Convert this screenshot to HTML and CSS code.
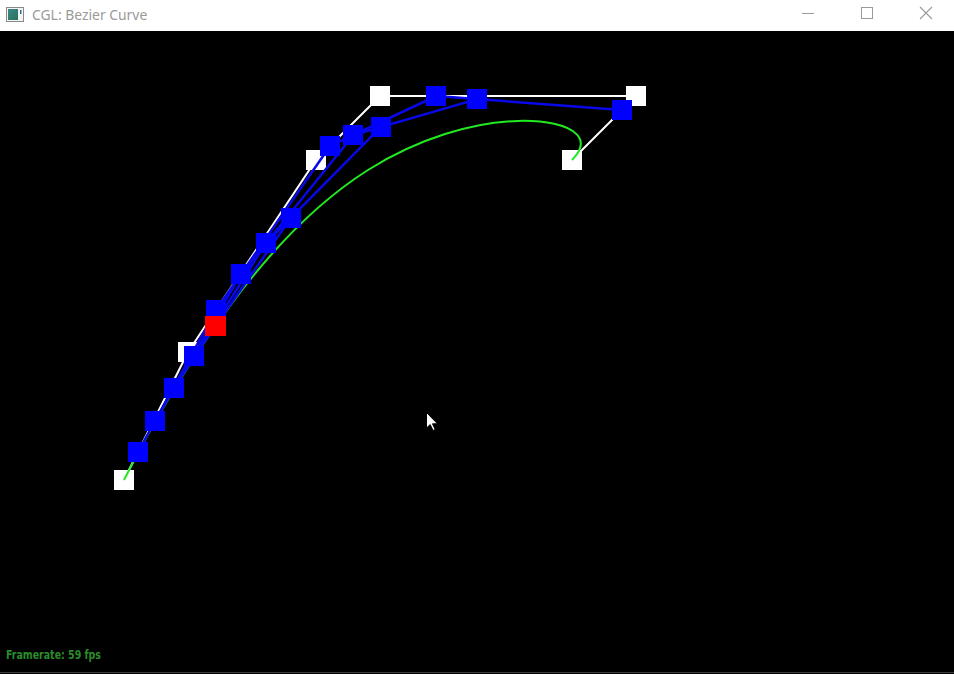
FILE: index.html
```html
<!DOCTYPE html>
<html>
<head>
<meta charset="utf-8">
<title>CGL: Bezier Curve</title>
<link rel="stylesheet" href="styles.css">
</head>
<body>
<div class="window">
  <header class="titlebar">
    <svg class="app-icon" width="18" height="16" viewBox="0 0 18 16">
      <rect x="0.5" y="0.5" width="17" height="14" fill="#f4f4f4" stroke="#8a8a8a"/>
      <defs>
        <linearGradient id="ig" x1="0" y1="0" x2="1" y2="1">
          <stop offset="0" stop-color="#3a8a8a"/>
          <stop offset="1" stop-color="#2e6f5a"/>
        </linearGradient>
      </defs>
      <rect x="2" y="2" width="10" height="11" fill="url(#ig)"/>
      <rect x="14" y="3" width="1.5" height="4" fill="#3a6a9a"/>
    </svg>
    <span class="title">CGL: Bezier Curve</span>
    <div class="controls">
      <svg class="ctl" width="46" height="31" viewBox="0 0 46 31"><line x1="17" y1="13.5" x2="29" y2="13.5" stroke="#9a9a9a" stroke-width="1"/></svg>
      <svg class="ctl" width="46" height="31" viewBox="0 0 46 31"><rect x="17.5" y="7.5" width="11" height="11" fill="none" stroke="#9a9a9a" stroke-width="1"/></svg>
      <svg class="ctl" width="46" height="31" viewBox="0 0 46 31"><path d="M17 7 L29 19 M29 7 L17 19" stroke="#9a9a9a" stroke-width="1.1"/></svg>
    </div>
  </header>
  <main class="viewport">
    <svg class="scene" width="954" height="641" viewBox="0 31 954 641">
      <!-- control points -->
      <g class="ctrl-pts" fill="#ffffff" shape-rendering="crispEdges">
        <rect x="114" y="470" width="20" height="20"/>
        <rect x="178" y="342" width="20" height="20"/>
        <rect x="306" y="150" width="20" height="20"/>
        <rect x="370" y="86" width="20" height="20"/>
        <rect x="626" y="86" width="20" height="20"/>
        <rect x="562" y="150" width="20" height="20"/>
      </g>
      <polyline fill="none" stroke="#ffffff" stroke-width="2"
        points="124,480 188,352 316,160 380,96 636,96 572,160"/>
      <!-- curve -->
      <path fill="none" stroke="#22ea22" stroke-width="2"
        d="M124,480 C150.67,426.67 188.92,361.46 230.38,305.31 C271.84,249.16 318,201.67 368,170 C418,138.33 473.34,122.09 518.13,120.94 C545,120.25 567.69,124.89 576.75,134.43 C582.79,140.79 582.67,149.33 572,160"/>
      <!-- de Casteljau construction -->
      <g fill="none" stroke="#0808e8" stroke-width="2.5" stroke-linejoin="round">
        <polyline points="138.08,451.84 216.16,309.76 330.08,145.92 436.32,96 621.92,110.08"/>
        <polyline points="155.26,420.58 241.22,273.72 353.45,134.94 477.15,99.10"/>
        <polyline points="174.17,388.27 265.91,243.19 380.66,127.06"/>
        <polyline points="194.35,356.35 291.16,217.64"/>
      </g>
      <g fill="#0000ff" shape-rendering="crispEdges">
        <rect x="128" y="442" width="20" height="20"/>
        <rect x="206" y="300" width="20" height="20"/>
        <rect x="320" y="136" width="20" height="20"/>
        <rect x="426" y="86" width="20" height="20"/>
        <rect x="612" y="100" width="20" height="20"/>
        <rect x="145" y="411" width="20" height="20"/>
        <rect x="231" y="264" width="20" height="20"/>
        <rect x="343" y="125" width="20" height="20"/>
        <rect x="467" y="89" width="20" height="20"/>
        <rect x="164" y="378" width="20" height="20"/>
        <rect x="256" y="233" width="20" height="20"/>
        <rect x="371" y="117" width="20" height="20"/>
        <rect x="184" y="346" width="20" height="20"/>
        <rect x="281" y="208" width="20" height="20"/>
      </g>
      <rect x="205" y="316" width="21" height="20" fill="#ff0000" shape-rendering="crispEdges"/>
      <!-- mouse cursor -->
      <path d="M426.5 412.5 L426.5 428 L430.2 424.6 L433 430.5 L435.2 429.5 L432.5 423.8 L437.5 423.8 Z"
        fill="#ffffff" stroke="#000000" stroke-width="1"/>
      <text class="fps" x="6" y="659" textLength="95" lengthAdjust="spacingAndGlyphs">Framerate: 59 fps</text>
    </svg>
  </main>
  <div class="frame-bottom"></div>
</div>
</body>
</html>
```
FILE: styles.css
```css
html, body {
  margin: 0;
  padding: 0;
  background: #000000;
  overflow: hidden;
}

.window {
  width: 954px;
  height: 674px;
  display: flex;
  flex-direction: column;
  background: #000000;
}

.titlebar {
  height: 31px;
  flex: 0 0 31px;
  background: #ffffff;
  display: flex;
  align-items: center;
  font-family: "Noto Sans", "Open Sans", "DejaVu Sans", sans-serif;
}

.app-icon {
  margin-left: 6px;
  margin-top: -2px;
  flex: 0 0 auto;
}

.title {
  margin-left: 8px;
  font-size: 13.9px;
  color: #9a9a9a;
  margin-top: -2px;
}

.controls {
  margin-left: auto;
  display: flex;
  align-self: stretch;
  margin-right: 5px;
}

.ctl {
  display: block;
  margin-left: 13px;
}

.ctl:first-child {
  margin-left: 0;
}

.viewport {
  flex: 0 0 641px;
  height: 641px;
  background: #000000;
}

.scene {
  display: block;
}

.fps {
  font-family: "DejaVu Sans", sans-serif;
  font-weight: bold;
  font-size: 12.5px;
  fill: #2a8c2a;
}

.frame-bottom {
  height: 1px;
  flex: 0 0 1px;
  background: #3a3f3a;
}
```
